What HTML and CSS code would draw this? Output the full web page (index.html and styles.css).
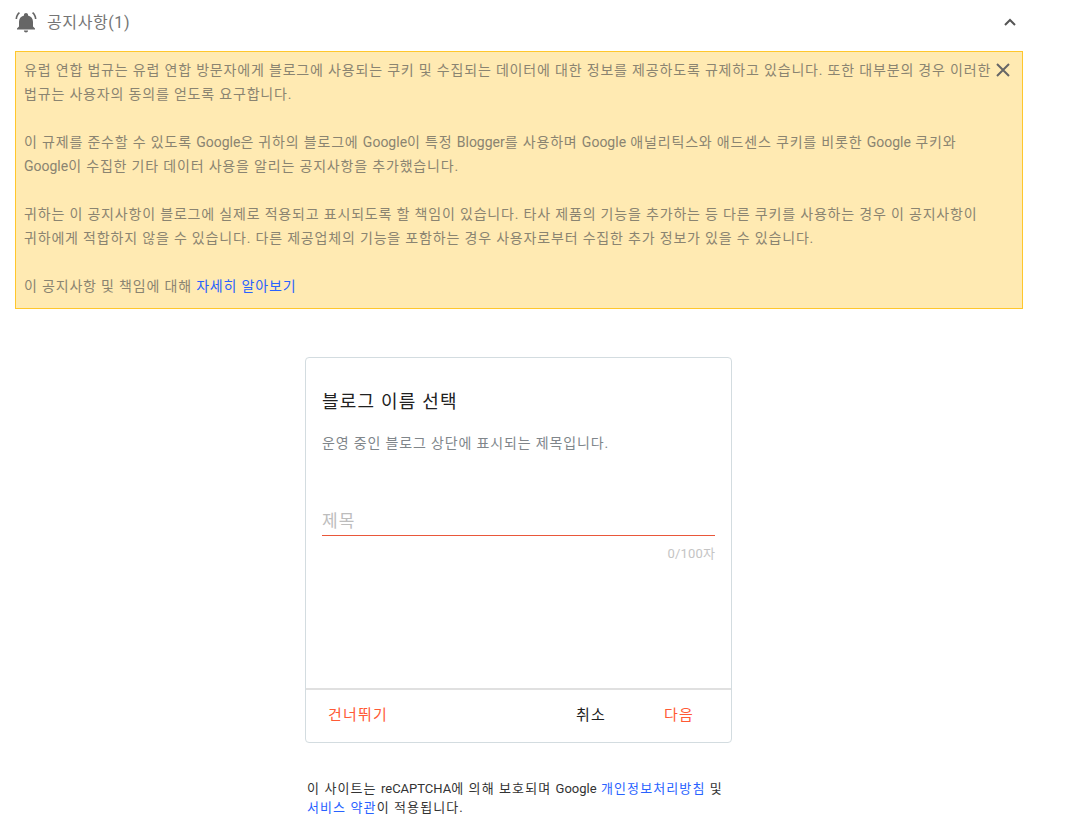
FILE: index.html
```html
<!DOCTYPE html>
<html lang="ko">
<head>
<meta charset="utf-8">
<title>블로그 이름 선택</title>
<link rel="stylesheet" href="styles.css">
</head>
<body>
<div class="notice-head">
  <svg class="bell" viewBox="0 0 22 22" width="22" height="22"><path d="M11 21.500c1.200 0 2.100-.8 2.100-2h-4.200c0 1.200.9 2 2.100 2zM18 15.500V11c0-3.300-1.700-5.800-5-6.600V3.700c0-1-.9-1.800-2-1.800s-2 .8-2 1.800v.7C5.700 5.200 4 7.700 4 11v4.500l-2 2v1h18v-1l-2-2z" fill="#666"/><path d="M5 2.200 3.900 1C2 2.600.7 5 .5 8h1.600c.2-2.400 1.300-4.500 2.900-5.800zM19.900 8h1.600C21.300 5 20 2.600 18.100 1L17 2.200c1.600 1.300 2.700 3.400 2.900 5.800z" fill="#666"/></svg>
  <span class="notice-title">공지사항(1)</span>
  <svg class="chevron" viewBox="0 0 14 10" width="14" height="10"><path d="M2 8 7 3l5 5" fill="none" stroke="#555" stroke-width="2"/></svg>
</div>
<div class="notice-box">
  <svg class="close" viewBox="0 0 16 16" width="16" height="16"><path d="M2 2l12 12M14 2 2 14" stroke="#666" stroke-width="2" fill="none"/></svg>
  <p>유럽 연합 법규는 유럽 연합 방문자에게 블로그에 사용되는 쿠키 및 수집되는 데이터에 대한 정보를 제공하도록 규제하고 있습니다. 또한 대부분의 경우 이러한<br>법규는 사용자의 동의를 얻도록 요구합니다.</p>
  <p>이 규제를 준수할 수 있도록 <span class="latin">Google</span>은 귀하의 블로그에 <span class="latin">Google</span>이 특정 <span class="latin">Blogger</span>를 사용하며 <span class="latin">Google</span> 애널리틱스와 애드센스 쿠키를 비롯한 <span class="latin">Google</span> 쿠키와<br><span class="latin">Google</span>이 수집한 기타 데이터 사용을 알리는 공지사항을 추가했습니다.</p>
  <p>귀하는 이 공지사항이 블로그에 실제로 적용되고 표시되도록 할 책임이 있습니다. 타사 제품의 기능을 추가하는 등 다른 쿠키를 사용하는 경우 이 공지사항이<br>귀하에게 적합하지 않을 수 있습니다. 다른 제공업체의 기능을 포함하는 경우 사용자로부터 수집한 추가 정보가 있을 수 있습니다.</p>
  <p>이 공지사항 및 책임에 대해 <a href="#">자세히 알아보기</a></p>
</div>
<main class="card">
  <div class="card-body">
    <h1>블로그 이름 선택</h1>
    <p class="desc">운영 중인 블로그 상단에 표시되는 제목입니다.</p>
    <div class="field">제목</div>
    <div class="count">0/100자</div>
  </div>
  <div class="card-foot">
    <span class="btn skip">건너뛰기</span>
    <span class="btn cancel">취소</span>
    <span class="btn next">다음</span>
  </div>
</main>
<p class="legal">이 사이트는 <span class="latin">reCAPTCHA</span>에 의해 보호되며 <span class="latin">Google</span> <a href="#">개인정보처리방침</a> 및<br><a href="#">서비스 약관</a>이 적용됩니다.</p>
</body>
</html>
```
FILE: styles.css
```css
* { box-sizing: border-box; }
html, body { margin: 0; padding: 0; }
body {
  width: 1067px;
  height: 828px;
  overflow: hidden;
  background: #fff;
  font-family: Roboto, "Noto Sans CJK KR", sans-serif;
  color: #222;
}
a { color: #2962ff; text-decoration: none; }
.latin { letter-spacing: 0; }
.notice-head {
  display: flex;
  align-items: center;
  height: 43px;
  margin-left: 15px;
  width: 1008px;
  padding-right: 6px;
}
.notice-title {
  margin: 0 0 1px 10px;
  font-size: 16px;
  letter-spacing: .6px;
  color: #757575;
  flex: 1;
}
.bell { flex: none; }
.chevron { flex: none; }
.notice-box {
  position: relative;
  margin: 8px 44px 0 15px;
  height: 258px;
  padding: 6px 8px;
  background: #ffeab2;
  border: 1px solid #ffc72c;
  font-size: 14px;
  letter-spacing: .82px;
  line-height: 24px;
  color: #8a8471;
}
.notice-box p { margin: 0 0 24px; white-space: nowrap; }
.close { position: absolute; top: 10px; right: 11px; }
.card {
  display: flex;
  flex-direction: column;
  width: 427px;
  height: 386px;
  margin: 48px 0 0 305px;
  border: 1px solid #d3dce0;
  border-radius: 4px;
}
.card-body { flex: 1; padding: 31px 16px 0; }
h1 {
  margin: 0;
  font-size: 18px;
  letter-spacing: 1.2px;
  font-weight: 400;
  line-height: 26px;
  color: #212121;
}
.desc {
  margin: 18px 0 0;
  font-size: 14px;
  letter-spacing: .85px;
  line-height: 20px;
  color: #80868b;
}
.field {
  margin-top: 54px;
  height: 29px;
  border-bottom: 1px solid #e9573a;
  font-size: 17px;
  letter-spacing: 1.2px;
  line-height: 28px;
  color: #bdbdbd;
}
.count {
  margin-top: 9px;
  text-align: right;
  font-size: 13px;
  letter-spacing: .15px;
  line-height: 18px;
  color: #c4c4c4;
}
.card-foot {
  display: flex;
  align-items: center;
  height: 54px;
  border-top: 2px solid #e0e0e0;
  padding: 0 37px 2px 22px;
  font-size: 15px;
  letter-spacing: 1.2px;
}
.btn { line-height: 20px; }
.skip { color: #ff5a36; margin-right: auto; }
.cancel { color: #212121; margin-right: 58px; }
.next { color: #ff5a36; }
.legal {
  width: 427px;
  margin: 36px 0 0 307px;
  font-size: 13px;
  letter-spacing: 1.1px;
  line-height: 19px;
  color: #333;
  white-space: nowrap;
}
```
